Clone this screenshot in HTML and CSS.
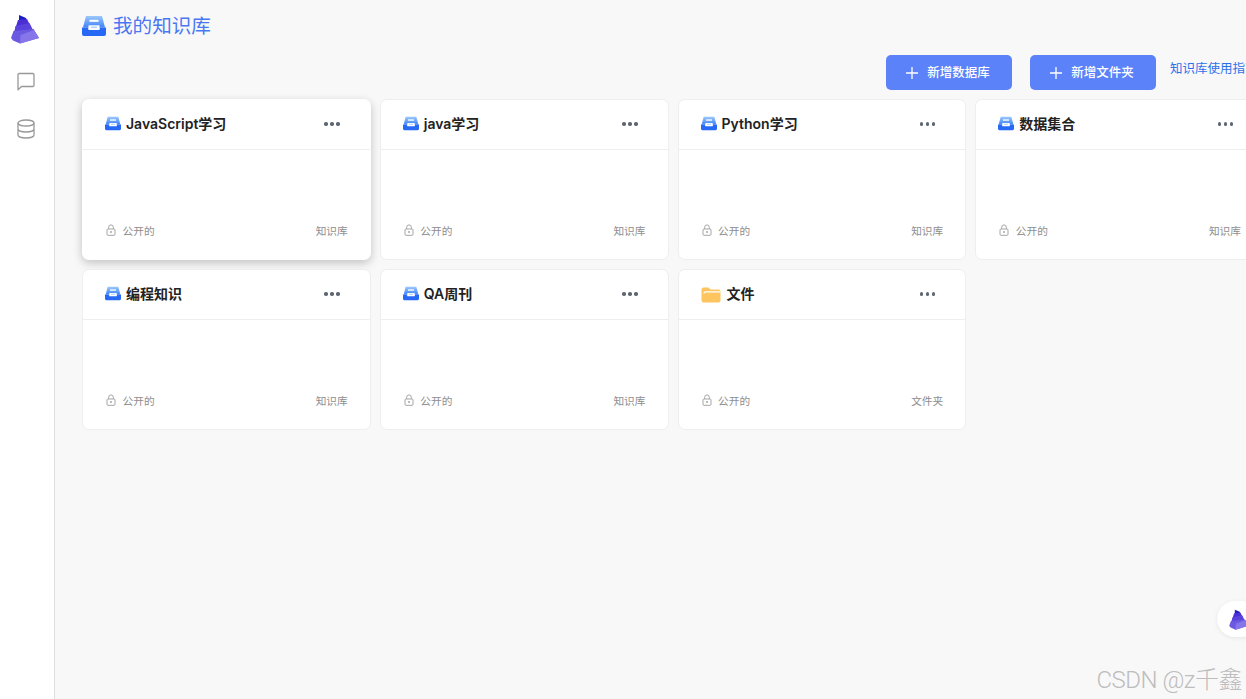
FILE: index.html
```html
<!DOCTYPE html>
<html lang="zh-CN">
<head>
<meta charset="utf-8">
<title>我的知识库</title>
<link rel="stylesheet" href="styles.css">
</head>
<body>
<svg class="defs" width="0" height="0" aria-hidden="true">
  <defs>
    <linearGradient id="trayTop" x1="0" y1="0" x2="0" y2="1">
      <stop offset="0" stop-color="#9cc8fc"/>
      <stop offset="1" stop-color="#3f83f8"/>
    </linearGradient>
    <symbol id="tray" viewBox="0 0 24 20">
      <path d="M4 0h16l3 11.500H1z" fill="url(#trayTop)"/>
      <path d="M0 11.500h6.500v2.500h11v-2.500H24V18a2 2 0 0 1-2 2H2a2 2 0 0 1-2-2z" fill="#2768f5"/>
      <path d="M7.500 4.800h9" fill="none" stroke="#fff" stroke-width="2"/>
      <path d="M6.500 9.300h11v4.200h-11z" fill="#fff"/>
      <path d="M9 11.200h6" fill="none" stroke="#8fbcfa" stroke-width="1"/>
    </symbol>
    <symbol id="folder" viewBox="0 0 20 16">
      <path d="M2.500 0.500h5l2 2h8a2 2 0 0 1 2 2v9a2 2 0 0 1-2 2h-15a2 2 0 0 1-2-2v-11a2 2 0 0 1 2-2z" fill="#fdc55f"/>
      <path d="M3 6.200c.2-.9.800-1.400 1.700-1.400H19" fill="none" stroke="#fff" stroke-width="1.200" stroke-linecap="round"/>
    </symbol>
    <symbol id="lock" viewBox="0 0 10 12">
      <path d="M2.700 5V3.200a2.300 2.300 0 0 1 4.600 0V5" fill="none" stroke="#a6a6a6" stroke-width="1"/>
      <rect x="1" y="5" width="8" height="6.300" rx="1" fill="none" stroke="#a6a6a6" stroke-width="1"/>
      <circle cx="5" cy="8.100" r="1" fill="#a6a6a6"/>
    </symbol>
    <symbol id="pyramid" viewBox="0 0 28 30">
      <path d="M8 1l7 3 1.500 5-8.500 3z" fill="#1c1cc4"/>
      <path d="M7 6l9-1 3.500 7-16 5z" fill="#4a30d4"/>
      <path d="M4.500 12l14-3 4 8-20 6z" fill="#5a42dc"/>
      <path d="M2.500 17l20-2 5.500 9-19 5.500-7-3L0 24z" fill="#6a5ae2"/>
      <path d="M9.500 21l13.500-5 5 8-19 5.500z" fill="#8676ea"/>
    </symbol>
  </defs>
</svg>

<div class="app">
  <aside class="sidebar">
    <svg class="logo"><use href="#pyramid"/></svg>
    <svg class="nav-icon" viewBox="0 0 20 20" fill="none" stroke="#999" stroke-width="1.300">
      <path d="M3.200 1.500h13.600a1.200 1.200 0 0 1 1.200 1.200v10.600a1.200 1.200 0 0 1-1.200 1.200H5.500L2 17.800V2.700a1.200 1.200 0 0 1 1.200-1.200z" stroke-linejoin="round"/>
    </svg>
    <svg class="nav-icon" viewBox="0 0 20 20" fill="none" stroke="#999" stroke-width="1.300">
      <ellipse cx="10" cy="4" rx="8" ry="3"/>
      <path d="M2 4v12c0 1.700 3.600 3 8 3s8-1.300 8-3V4M2 10c0 1.700 3.600 3 8 3s8-1.300 8-3"/>
    </svg>
  </aside>

  <main class="main">
    <h1 class="page-title"><svg class="title-icon"><use href="#tray"/></svg>我的知识库</h1>
    <div class="toolbar">
      <button class="btn"><svg class="plus" viewBox="0 0 12 12"><path d="M6 0v12M0 6h12" stroke="#fff" stroke-width="1.300"/></svg>新增数据库</button>
      <button class="btn"><svg class="plus" viewBox="0 0 12 12"><path d="M6 0v12M0 6h12" stroke="#fff" stroke-width="1.300"/></svg>新增文件夹</button>
      <a class="guide" href="#">知识库使用指南</a>
    </div>

    <div class="grid">
      <section class="card card-active">
        <header class="card-head"><svg class="card-icon"><use href="#tray"/></svg><span class="card-name">JavaScript学习</span><span class="dots"><i></i><i></i><i></i></span></header>
        <footer class="card-foot"><svg class="lock"><use href="#lock"/></svg><span>公开的</span><span class="kind">知识库</span></footer>
      </section>
      <section class="card">
        <header class="card-head"><svg class="card-icon"><use href="#tray"/></svg><span class="card-name">java学习</span><span class="dots"><i></i><i></i><i></i></span></header>
        <footer class="card-foot"><svg class="lock"><use href="#lock"/></svg><span>公开的</span><span class="kind">知识库</span></footer>
      </section>
      <section class="card">
        <header class="card-head"><svg class="card-icon"><use href="#tray"/></svg><span class="card-name">Python学习</span><span class="dots"><i></i><i></i><i></i></span></header>
        <footer class="card-foot"><svg class="lock"><use href="#lock"/></svg><span>公开的</span><span class="kind">知识库</span></footer>
      </section>
      <section class="card">
        <header class="card-head"><svg class="card-icon"><use href="#tray"/></svg><span class="card-name">数据集合</span><span class="dots"><i></i><i></i><i></i></span></header>
        <footer class="card-foot"><svg class="lock"><use href="#lock"/></svg><span>公开的</span><span class="kind">知识库</span></footer>
      </section>
      <section class="card">
        <header class="card-head"><svg class="card-icon"><use href="#tray"/></svg><span class="card-name">编程知识</span><span class="dots"><i></i><i></i><i></i></span></header>
        <footer class="card-foot"><svg class="lock"><use href="#lock"/></svg><span>公开的</span><span class="kind">知识库</span></footer>
      </section>
      <section class="card">
        <header class="card-head"><svg class="card-icon"><use href="#tray"/></svg><span class="card-name">QA周刊</span><span class="dots"><i></i><i></i><i></i></span></header>
        <footer class="card-foot"><svg class="lock"><use href="#lock"/></svg><span>公开的</span><span class="kind">知识库</span></footer>
      </section>
      <section class="card">
        <header class="card-head"><svg class="card-icon folder-icon"><use href="#folder"/></svg><span class="card-name">文件</span><span class="dots"><i></i><i></i><i></i></span></header>
        <footer class="card-foot"><svg class="lock"><use href="#lock"/></svg><span>公开的</span><span class="kind">文件夹</span></footer>
      </section>
    </div>
  </main>
</div>

<div class="float-bubble"><svg class="float-logo"><use href="#pyramid"/></svg></div>
<div class="watermark">CSDN @z千鑫</div>
</body>
</html>
```

FILE: styles.css
```css
* { box-sizing: border-box; }

html, body {
  height: 100%;
  margin: 0;
  overflow: hidden;
}

body {
  position: relative;
  background: #f8f8f8;
  font-family: "Inter", "Noto Sans CJK SC", sans-serif;
}

.defs { position: absolute; }

.app {
  display: flex;
  width: 1246px;
  height: 699px;
  overflow: hidden;
}

.sidebar {
  flex: 0 0 55px;
  display: flex;
  flex-direction: column;
  align-items: center;
  padding-top: 14px;
  padding-right: 3px;
  background: #fff;
  border-right: 1px solid #dedede;
}

.logo { flex: none; width: 28px; height: 30px; margin-left: -1px; }

.nav-icon { flex: none; width: 20px; height: 20px; margin-top: 28px; }
.nav-icon + .nav-icon { margin-top: 27px; }

.main {
  flex: 1 0 auto;
  width: 1191px;
  padding-left: 27px;
}

.page-title {
  display: flex;
  align-items: center;
  height: 20px;
  margin: 16px 0 0;
  font-size: 19.600px;
  font-weight: 400;
  line-height: 20px;
  color: #4b78f2;
}

.title-icon { width: 24px; height: 20px; margin-right: 7px; }

.toolbar {
  display: flex;
  align-items: flex-start;
  height: 35px;
  margin-top: 19px;
  padding-left: 804px;
}

.btn {
  display: flex;
  flex: 0 0 126px;
  align-items: center;
  justify-content: center;
  height: 35px;
  margin-right: 18px;
  padding: 0 2px 3px 0;
  border: 0;
  border-radius: 5px;
  background: #5b82f8;
  color: #fff;
  font: 500 12.500px "Inter", "Noto Sans CJK SC", sans-serif;
}

.plus {
  flex: none;
  width: 12px;
  height: 12px;
  margin-right: 9px;
  margin-top: 3px;
}

.guide {
  flex: none;
  margin-left: -4px;
  margin-top: 5px;
  font-size: 12.500px;
  line-height: 18px;
  color: #2b72ea;
  text-decoration: none;
  white-space: nowrap;
}

.grid {
  display: grid;
  grid-template-columns: repeat(4, 288.750px);
  grid-auto-rows: 161px;
  column-gap: 9px;
  row-gap: 9px;
  margin-top: 9px;
}

.card {
  display: flex;
  flex-direction: column;
  background: #fff;
  border: 1px solid #eeeeee;
  border-radius: 7px;
}

.card-active {
  border-color: transparent;
  box-shadow: 0 3px 10px rgba(0, 0, 0, 0.22);
}

.card-head {
  display: flex;
  align-items: center;
  height: 50px;
  padding: 0 30px 0 22px;
  border-bottom: 1px solid #eeeeee;
}

.card-icon { flex: none; width: 16px; height: 15px; margin-right: 5px; margin-top: -2px; }
.folder-icon { width: 20px; height: 16px; margin-right: 6px; margin-top: 0; }

.card-name {
  flex: 1;
  font-size: 14px;
  font-weight: 600;
  line-height: 18px;
  margin-top: -1px;
  color: #222;
}

.dots { display: flex; gap: 2.500px; margin-top: -1px; }
.dots i {
  width: 3.500px;
  height: 3.500px;
  border-radius: 50%;
  background: #5e6672;
}

.card-foot {
  display: flex;
  align-items: center;
  margin-top: auto;
  height: 58px;
  padding: 0 22px 0 23px;
  font-size: 10.700px;
  color: #8e8e8e;
}

.lock { flex: none; width: 10px; height: 12px; margin-right: 6.500px; }
.kind { margin-left: auto; }

.float-bubble {
  position: absolute;
  right: -14px;
  top: 601px;
  display: flex;
  align-items: center;
  justify-content: center;
  width: 43px;
  height: 36px;
  border-radius: 18px;
  background: #fff;
  box-shadow: 0 1px 4px rgba(0, 0, 0, 0.08);
}

.float-logo { width: 20px; height: 21px; }

.watermark {
  position: absolute;
  right: 4px;
  bottom: 4px;
  font-family: "Roboto", "Noto Sans CJK SC", sans-serif;
  font-size: 24px;
  font-weight: 300;
  line-height: 30px;
  letter-spacing: -0.500px;
  color: #bdbdbd;
  white-space: nowrap;
}
```
